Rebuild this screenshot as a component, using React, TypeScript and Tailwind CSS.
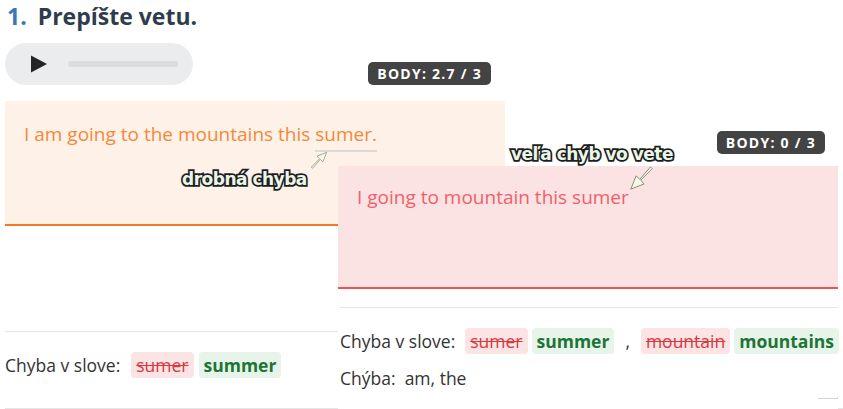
import React from "react";

const font = "font-['Open_Sans','Noto_Sans',sans-serif]";

function Chip({ word, kind }: { word: string; kind: "bad" | "good" }) {
  return kind === "bad" ? (
    <span className="inline-flex h-[26px] shrink-0 items-center rounded-[4px] bg-[#fde4e4] px-[5px] text-[#d63a40] line-through decoration-1">
      {word}
    </span>
  ) : (
    <span className="inline-flex h-[26px] shrink-0 items-center rounded-[4px] bg-[#e7f4ea] px-[5px] font-bold text-[#1d7436]">
      {word}
    </span>
  );
}

function Badge({ children }: { children: React.ReactNode }) {
  return (
    <span className="inline-flex h-[23px] items-center rounded-[5px] bg-[#434343] px-[9px] text-[14px] font-bold tracking-[0.09em] text-white">
      {children}
    </span>
  );
}

function Note({ children }: { children: React.ReactNode }) {
  return (
    <span className="whitespace-nowrap font-['DejaVu_Sans',sans-serif] text-[17px] font-bold leading-none tracking-[-0.5px] text-[#eaf6e8] [-webkit-text-stroke:3.5px_#1e1e1e] [paint-order:stroke_fill]">
      {children}
    </span>
  );
}

function Arrow({ size, flip }: { size: number; flip?: boolean }) {
  // small hollow arrow, pointing up-right by default
  return (
    <svg width={size} height={size} viewBox="0 0 28 28" className={flip ? "rotate-180" : ""}>
      <path
        d="M2 25 L15 12 L11 8 L26 2 L20 17 L16 13 L4 27 Z"
        fill="#f5fae8"
        stroke="#8a8a7a"
        strokeWidth="1.1"
        strokeLinejoin="round"
      />
    </svg>
  );
}

export default function App() {
  return (
    <div className={`relative h-[409px] w-[843px] overflow-hidden bg-white ${font} text-[#333]`}>
      {/* left column */}
      <div className="w-[505px] pl-[5px]">
        <h1 className="pl-[2px] pt-[1px] text-[23px] font-bold leading-[30px] text-[#2e3d4d]">
          <span className="text-[#3a78b6]">1.</span>
          <span className="ml-[11px]">Prepíšte vetu.</span>
        </h1>
        <div className="mt-[12px] flex h-[42px] w-[188px] items-center rounded-full bg-[#ebeced] pl-[25px] pr-[15px]">
          <svg width="18" height="18" viewBox="0 0 18 18">
            <path d="M1 0.5 L17 9 L1 17.5 Z" fill="#242424" />
          </svg>
          <div className="ml-[20px] h-[6px] flex-1 rounded-full bg-[#dcdcdc]" />
        </div>
        <div className="-mt-[23px] flex justify-end pr-[14px]">
          <Badge>BODY: 2.7 / 3</Badge>
        </div>
        <div className="mt-[16px] h-[125px] border-b-2 border-[#f27a27] bg-[#fdf1e8] px-[19px] pt-[20px]">
          <p className="text-[19px] leading-[26px] text-[#f5883a]">
            I am going to the mountains this{" "}
            <span className="border-b-2 border-[#dedbd6] pb-[3px]">sumer.</span>
          </p>
        </div>
        <div className="mt-[105px] w-[333px] border-t border-[#e6e6e6]" />
        <div className="flex h-[76px] items-center gap-[5px] pb-[10px] text-[17.5px]">
          <span className="mr-[6px] whitespace-nowrap">Chyba v slove:</span>
          <Chip word="sumer" kind="bad" />
          <Chip word="summer" kind="good" />
        </div>
        <div className="w-[838px] border-t border-[#e6e6e6]" />
      </div>

      {/* annotation on the left card */}
      <div className="absolute left-[182px] top-[150px] flex">
        <div className="pt-[17px]">
          <Note>drobná chyba</Note>
        </div>
        <div className="ml-[3px] mt-[1px]">
          <Arrow size={18} />
        </div>
      </div>

      {/* overlapping second answer */}
      <div className="absolute left-[338px] top-[131px] w-[500px]">
        <div className="flex justify-end pr-[13px]">
          <Badge>BODY: 0 / 3</Badge>
        </div>
        <div className="mt-[12px] h-[123px] border-b-2 border-[#ef5350] bg-[#fce3e3] px-[19px] pt-[18px]">
          <p className="text-[19px] leading-[26px] text-[#f0606a]">I going to mountain this sumer</p>
        </div>
        <div className="h-[125px] bg-white">
          <div className="h-[18px]" />
          <div className="ml-[2px] border-t border-[#e6e6e6]" />
          <div className="mt-[20px] flex h-[26px] items-center gap-[4px] whitespace-nowrap pl-[2px] text-[17.5px]">
            <span className="mr-[6px]">Chyba v slove:</span>
            <Chip word="sumer" kind="bad" />
            <Chip word="summer" kind="good" />
            <span className="mx-[7px]">,</span>
            <Chip word="mountain" kind="bad" />
            <Chip word="mountains" kind="good" />
          </div>
          <div className="mt-[11px] pl-[2px] text-[17.5px] leading-[26px]">Chýba:&nbsp; am, the</div>
          <div className="ml-auto mt-[6px] h-[2px] w-[20px] border-b border-r border-[#d4d4d4]" />
        </div>
      </div>

      {/* annotation on the right card */}
      <div className="absolute left-[511px] top-[146px] flex flex-col items-start">
        <Note>veľa chýb vo vete</Note>
        <div className="ml-[118px] mt-[3px]">
          <Arrow size={25} flip />
        </div>
      </div>
    </div>
  );
}
